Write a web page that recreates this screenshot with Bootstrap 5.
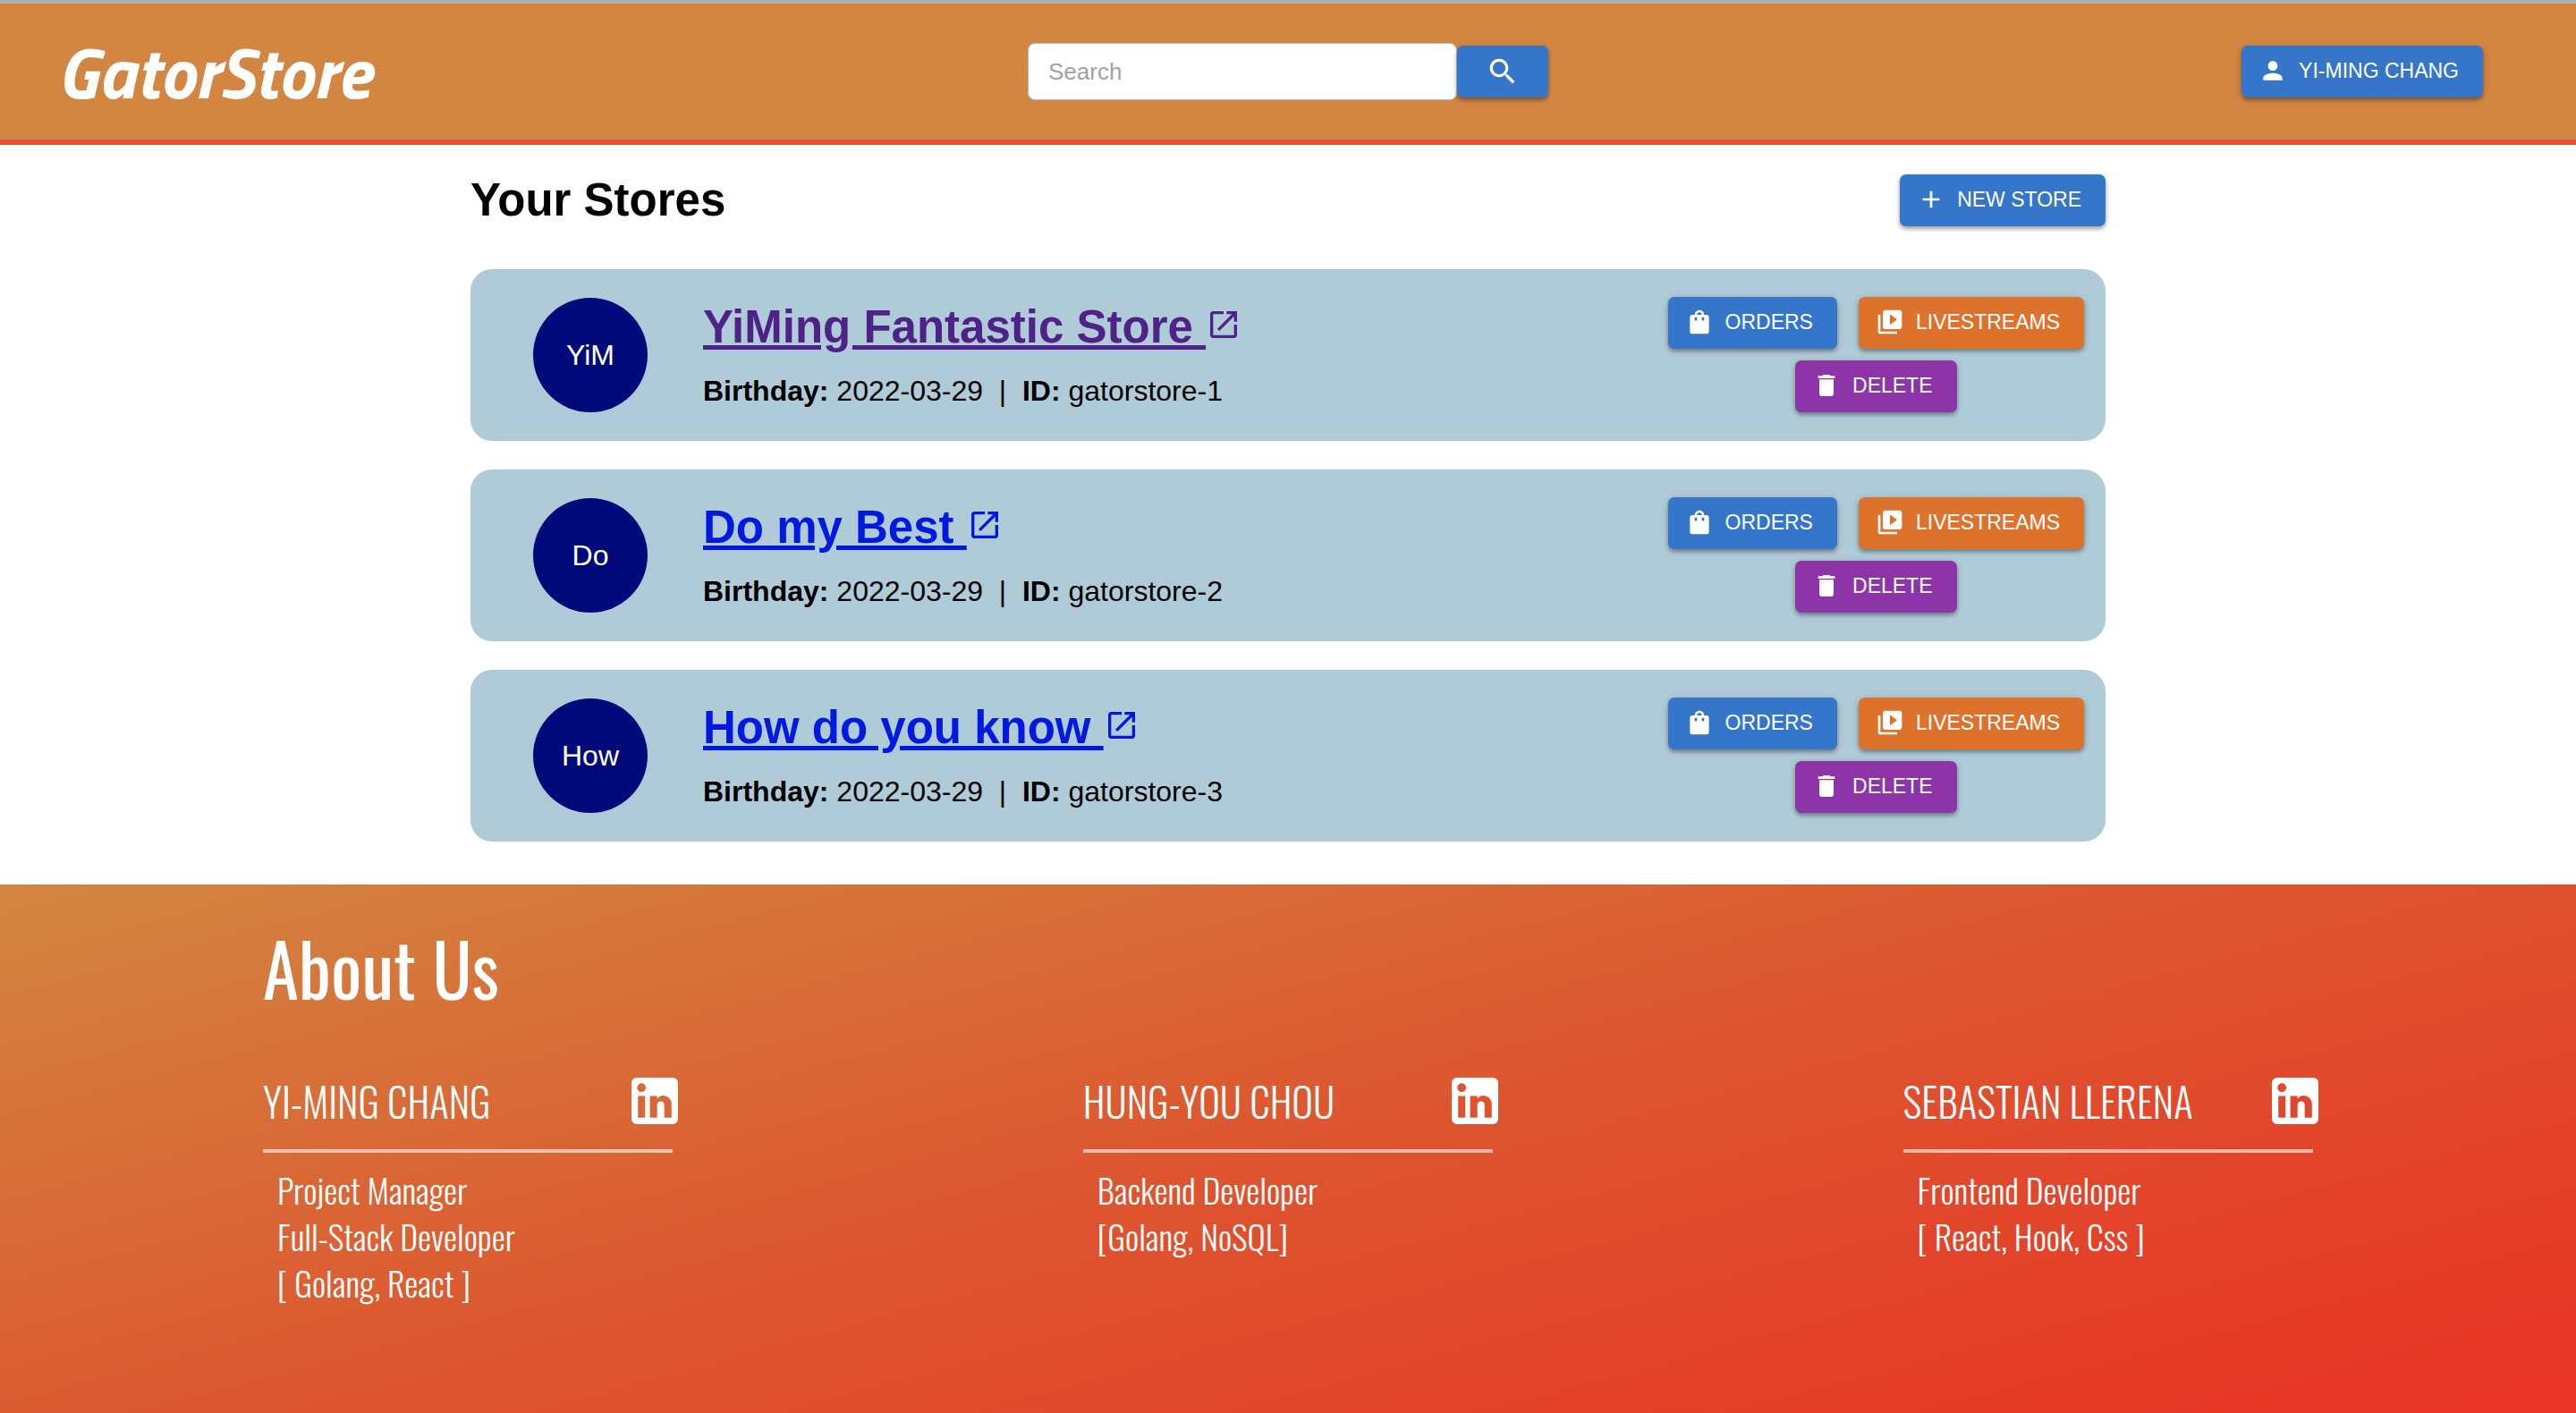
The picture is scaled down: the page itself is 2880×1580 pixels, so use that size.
<!DOCTYPE html>
<html lang="en">
<head>
<meta charset="utf-8">
<meta name="viewport" content="width=device-width, initial-scale=1">
<title>GatorStore</title>
<link href="https://cdn.jsdelivr.net/npm/bootstrap@5.3.0/dist/css/bootstrap.min.css" rel="stylesheet">
<style>
  body { font-family: "Liberation Sans", Arial, sans-serif; color: #000; background: #fff; }
  svg { fill: currentColor; flex: none; }
  .topbar { display: grid; grid-template-columns: 1fr auto 1fr; background: #d38641; border-top: 4px solid #b0b0b2; border-bottom: 6px solid #e85130; height: 162px; }
  .bar-start { padding-left: 64px; }
  .bar-end { padding-right: 104px; }
  .brand { font: italic 700 80px/80px "Titillium Web", "Open Sans", sans-serif; color: #fff; text-decoration: none; }
  .search-box { width: 480px; height: 64px; border: 1px solid #bbb; border-radius: 8px; padding: 0 22px; font-size: 26px; }
  .search-box::placeholder { color: #a2a2a2; }
  .act { --bs-btn-color: #fff; --bs-btn-hover-color: #fff; --bs-btn-active-color: #fff; display: inline-flex; align-items: center; gap: 13px; height: 58px; padding: 0 27px 2px 19px; border: 0; border-radius: 7px; font-size: 23px; line-height: 32px; text-transform: uppercase; box-shadow: 0 3px 4px rgba(0,0,0,.32), 0 1px 8px rgba(0,0,0,.12); }
  .act svg { width: 32px; height: 32px; }
  .act-blue { --bs-btn-bg: #3576cb; --bs-btn-hover-bg: #2b65b2; }
  .act-orange { --bs-btn-bg: #dd722c; --bs-btn-hover-bg: #c26021; }
  .act-purple { --bs-btn-bg: #8e34a9; --bs-btn-hover-bg: #78298f; }
  .act-search { width: 102px; padding: 0; justify-content: center; }
  .act-search svg { width: 38px; height: 38px; }
  .stores { width: 1828px; max-width: 100%; }
  .page-title { font-size: 51px; line-height: 59px; font-weight: 700; }
  .store { background: #afcbd7; border-radius: 24px; padding: 32px 24px 32px 70px; margin-bottom: 32px; height: 192px; }
  .face { width: 128px; height: 128px; border-radius: 50%; background: #000a7a; color: #fff; font-size: 32px; }
  .store-info { margin-left: 62px; }
  .store-name { font-size: 51px; line-height: 64px; font-weight: 700; margin: 0 0 19px; }
  .store-name a { color: #0019e0; }
  .store-name a.seen { color: #4f2287; }
  .store-name svg { width: 40px; height: 40px; vertical-align: baseline; }
  .facts { font-size: 32px; line-height: 40px; white-space: pre; }
  .store-actions { gap: 13px; padding-bottom: 1px; }
  .about { background: linear-gradient(165deg, #d38641, #dd552f 50%, #e83525 96%); color: #fff; font-family: "Oswald", "Liberation Sans Narrow", "Liberation Sans", sans-serif; padding: 40px 294px; }
  .about-title { font-size: 81px; line-height: 104px; }
  .member { width: 20%; }
  .member-name { font-size: 45px; font-weight: 300; line-height: 52px; white-space: nowrap; }
  .member a svg { width: 52px; height: 52px; display: block; }
  .member-link { margin-right: -6px; }
  .member hr { height: 4px; border: 0; background: #fff; opacity: .6; margin: 28px 0 15px; }
  .role { font-size: 38px; font-weight: 300; line-height: 52px; padding-left: 16px; white-space: nowrap; }
</style>
</head>
<body class="d-flex flex-column min-vh-100">
<svg class="d-none" aria-hidden="true">
  <symbol id="i-search" viewBox="0 0 24 24"><path d="M15.5 14h-.79l-.28-.27C15.41 12.59 16 11.11 16 9.5 16 5.91 13.09 3 9.5 3S3 5.91 3 9.5 5.91 16 9.5 16c1.61 0 3.09-.59 4.23-1.57l.27.28v.79l5 4.99L20.49 19l-4.99-5zm-6 0C7.01 14 5 11.99 5 9.5S7.01 5 9.5 5 14 7.01 14 9.5 11.99 14 9.5 14z"/></symbol>
  <symbol id="i-person" viewBox="0 0 24 24"><path d="M12 12c2.21 0 4-1.79 4-4s-1.79-4-4-4-4 1.79-4 4 1.79 4 4 4zm0 2c-2.67 0-8 1.34-8 4v2h16v-2c0-2.66-5.33-4-8-4z"/></symbol>
  <symbol id="i-add" viewBox="0 0 24 24"><path d="M19 13h-6v6h-2v-6H5v-2h6V5h2v6h6v2z"/></symbol>
  <symbol id="i-open" viewBox="0 0 24 24"><path d="M19 19H5V5h7V3H5c-1.11 0-2 .9-2 2v14c0 1.1.89 2 2 2h14c1.1 0 2-.9 2-2v-7h-2v7zM14 3v2h3.59l-9.83 9.83 1.41 1.41L19 6.41V10h2V3h-7z"/></symbol>
  <symbol id="i-bag" viewBox="0 0 24 24"><path d="M18 6h-2c0-2.21-1.79-4-4-4S8 3.79 8 6H6c-1.1 0-2 .9-2 2v12c0 1.1.9 2 2 2h12c1.1 0 2-.9 2-2V8c0-1.1-.9-2-2-2zm-8 4c0 .55-.45 1-1 1s-1-.45-1-1V8h2v2zm2-6c1.1 0 2 .9 2 2h-4c0-1.1.9-2 2-2zm4 6c0 .55-.45 1-1 1s-1-.45-1-1V8h2v2z"/></symbol>
  <symbol id="i-video" viewBox="0 0 24 24"><path d="M4 6H2v14c0 1.1.9 2 2 2h14v-2H4V6zm16-4H8c-1.1 0-2 .9-2 2v12c0 1.1.9 2 2 2h12c1.1 0 2-.9 2-2V4c0-1.1-.9-2-2-2zm-8 12.5v-9l6 4.5-6 4.5z"/></symbol>
  <symbol id="i-trash" viewBox="0 0 24 24"><path d="M6 19c0 1.1.9 2 2 2h8c1.1 0 2-.9 2-2V7H6v12zM19 4h-3.5l-1-1h-5l-1 1H5v2h14V4z"/></symbol>
  <symbol id="i-linkedin" viewBox="3 3 18 18"><path d="M19 3a2 2 0 0 1 2 2v14a2 2 0 0 1-2 2H5a2 2 0 0 1-2-2V5a2 2 0 0 1 2-2h14m-.5 15.5v-5.3a3.26 3.26 0 0 0-3.26-3.26c-.85 0-1.84.52-2.32 1.3v-1.11h-2.79v8.37h2.79v-4.93c0-.77.62-1.4 1.39-1.4a1.4 1.4 0 0 1 1.4 1.4v4.93h2.79M6.88 8.56a1.68 1.68 0 0 0 1.68-1.68c0-.93-.75-1.69-1.68-1.69a1.69 1.69 0 0 0-1.69 1.69c0 .93.76 1.68 1.69 1.68m1.39 9.94v-8.37H5.5v8.37h2.77z"/></symbol>
</svg>

<header class="topbar align-items-center">
  <div class="bar-start"><a class="brand" href="#">GatorStore</a></div>
  <form class="d-flex align-items-center" role="search">
    <input class="search-box" type="search" placeholder="Search" aria-label="Search">
    <button class="btn act act-blue act-search" type="button" aria-label="Search"><svg><use href="#i-search"/></svg></button>
  </form>
  <div class="bar-end d-flex justify-content-end"><button class="btn act act-blue" type="button"><svg><use href="#i-person"/></svg>Yi-Ming Chang</button></div>
</header>

<main class="stores mx-auto pb-3">
  <div class="d-flex justify-content-between align-items-center py-4 mt-2 mb-4">
    <h1 class="page-title m-0">Your Stores</h1>
    <button class="btn act act-blue" type="button"><svg><use href="#i-add"/></svg>New Store</button>
  </div>

  <article class="store d-flex align-items-center">
    <div class="face d-flex align-items-center justify-content-center flex-shrink-0">YiM</div>
    <div class="store-info flex-grow-1 pb-1">
      <h2 class="store-name"><a class="seen" href="#">YiMing Fantastic Store <svg><use href="#i-open"/></svg></a></h2>
      <p class="facts m-0"><b>Birthday:</b> 2022-03-29  |  <b>ID:</b> gatorstore-1</p>
    </div>
    <div class="store-actions d-flex flex-column align-items-center">
      <div class="d-flex gap-4">
        <button class="btn act act-blue" type="button"><svg><use href="#i-bag"/></svg>Orders</button>
        <button class="btn act act-orange" type="button"><svg><use href="#i-video"/></svg>Livestreams</button>
      </div>
      <button class="btn act act-purple" type="button"><svg><use href="#i-trash"/></svg>Delete</button>
    </div>
  </article>

  <article class="store d-flex align-items-center">
    <div class="face d-flex align-items-center justify-content-center flex-shrink-0">Do</div>
    <div class="store-info flex-grow-1 pb-1">
      <h2 class="store-name"><a href="#">Do my Best <svg><use href="#i-open"/></svg></a></h2>
      <p class="facts m-0"><b>Birthday:</b> 2022-03-29  |  <b>ID:</b> gatorstore-2</p>
    </div>
    <div class="store-actions d-flex flex-column align-items-center">
      <div class="d-flex gap-4">
        <button class="btn act act-blue" type="button"><svg><use href="#i-bag"/></svg>Orders</button>
        <button class="btn act act-orange" type="button"><svg><use href="#i-video"/></svg>Livestreams</button>
      </div>
      <button class="btn act act-purple" type="button"><svg><use href="#i-trash"/></svg>Delete</button>
    </div>
  </article>

  <article class="store d-flex align-items-center">
    <div class="face d-flex align-items-center justify-content-center flex-shrink-0">How</div>
    <div class="store-info flex-grow-1 pb-1">
      <h2 class="store-name"><a href="#">How do you know <svg><use href="#i-open"/></svg></a></h2>
      <p class="facts m-0"><b>Birthday:</b> 2022-03-29  |  <b>ID:</b> gatorstore-3</p>
    </div>
    <div class="store-actions d-flex flex-column align-items-center">
      <div class="d-flex gap-4">
        <button class="btn act act-blue" type="button"><svg><use href="#i-bag"/></svg>Orders</button>
        <button class="btn act act-orange" type="button"><svg><use href="#i-video"/></svg>Livestreams</button>
      </div>
      <button class="btn act act-purple" type="button"><svg><use href="#i-trash"/></svg>Delete</button>
    </div>
  </article>
</main>

<footer class="about flex-grow-1">
  <h2 class="about-title fw-normal m-0">About Us</h2>
  <div class="d-flex justify-content-between pt-5 mt-4">
    <section class="member">
      <div class="member-link d-flex justify-content-between align-items-center">
        <h3 class="member-name m-0">YI-MING CHANG</h3>
        <a class="text-white" href="#" aria-label="LinkedIn"><svg><use href="#i-linkedin"/></svg></a>
      </div>
      <hr>
      <p class="role m-0">Project Manager<br>Full-Stack Developer<br>[ Golang, React ]</p>
    </section>
    <section class="member">
      <div class="member-link d-flex justify-content-between align-items-center">
        <h3 class="member-name m-0">HUNG-YOU CHOU</h3>
        <a class="text-white" href="#" aria-label="LinkedIn"><svg><use href="#i-linkedin"/></svg></a>
      </div>
      <hr>
      <p class="role m-0">Backend Developer<br>[Golang, NoSQL]</p>
    </section>
    <section class="member">
      <div class="member-link d-flex justify-content-between align-items-center">
        <h3 class="member-name m-0">SEBASTIAN LLERENA</h3>
        <a class="text-white" href="#" aria-label="LinkedIn"><svg><use href="#i-linkedin"/></svg></a>
      </div>
      <hr>
      <p class="role m-0">Frontend Developer<br>[ React, Hook, Css ]</p>
    </section>
  </div>
</footer>
<script src="https://cdn.jsdelivr.net/npm/bootstrap@5.3.0/dist/js/bootstrap.bundle.min.js"></script>
</body>
</html>
